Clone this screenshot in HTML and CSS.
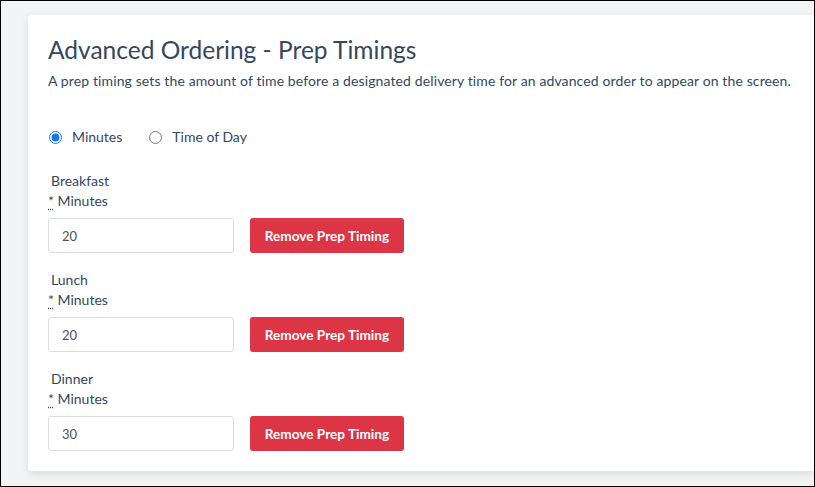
FILE: index.html
```html
<!DOCTYPE html>
<html lang="en">
<head>
<meta charset="utf-8">
<title>Advanced Ordering - Prep Timings</title>
<link rel="stylesheet" href="styles.css">
</head>
<body>
<div class="frame">
  <main class="card">
    <h1 class="title">Advanced Ordering - Prep Timings</h1>
    <p class="desc">A prep timing sets the amount of time before a designated delivery time for an advanced order to appear on the screen.</p>

    <div class="radios">
      <label class="radio"><input type="radio" name="mode" checked> <span>Minutes</span></label>
      <label class="radio"><input type="radio" name="mode"> <span>Time of Day</span></label>
    </div>

    <section class="group">
      <div class="meal">Breakfast</div>
      <label class="field-label"><abbr title="required">*</abbr> Minutes</label>
      <div class="row">
        <input class="input" type="text" value="20">
        <button class="btn-remove" type="button">Remove Prep Timing</button>
      </div>
    </section>

    <section class="group">
      <div class="meal">Lunch</div>
      <label class="field-label"><abbr title="required">*</abbr> Minutes</label>
      <div class="row">
        <input class="input" type="text" value="20">
        <button class="btn-remove" type="button">Remove Prep Timing</button>
      </div>
    </section>

    <section class="group">
      <div class="meal">Dinner</div>
      <label class="field-label"><abbr title="required">*</abbr> Minutes</label>
      <div class="row">
        <input class="input" type="text" value="30">
        <button class="btn-remove" type="button">Remove Prep Timing</button>
      </div>
    </section>
  </main>
</div>
</body>
</html>
```
FILE: styles.css
```css
* { box-sizing: border-box; }
html, body { margin: 0; padding: 0; }
body {
  font-family: "Lato", "Liberation Sans", sans-serif;
  color: #34475f;
  background: #f3f4f6;
}
.frame {
  width: 815px;
  height: 487px;
  border: 1px solid #000;
  background: #f3f4f6;
  padding: 14px 0 0 27px;
  overflow: hidden;
}
.card {
  background: #fff;
  border-radius: 4px 0 0 4px;
  box-shadow: 0 3px 10px rgba(0,0,0,0.10);
  padding: 20px 20px 19px 20px;
  height: 456px;
}
.title {
  margin: 0;
  font-size: 24.5px;
  line-height: 29px;
  font-weight: 400;
  color: #34475f;
}
.desc {
  margin: 7px 0 0 0;
  font-size: 14px;
  line-height: 20px;
  letter-spacing: 0.12px;
}
.radios {
  display: flex;
  gap: 26px;
  margin-top: 36px;
  align-items: center;
}
.radio {
  display: flex;
  align-items: center;
  gap: 10px;
  font-size: 14px;
  line-height: 20px;
}
.radio input {
  margin: 0 0 0 1px;
  width: 13px;
  height: 13px;
  accent-color: #1a73e8;
}
.group { margin-top: 24px; }
.group + .group { margin-top: 17px; }
.meal, .field-label {
  display: block;
  font-size: 14px;
  line-height: 20px;
  padding-left: 3px;
}
.field-label { padding-left: 0; }
abbr {
  text-decoration: underline dotted;
  text-underline-offset: 3px;
}
.row {
  display: flex;
  gap: 16px;
  margin-top: 7px;
}
.input {
  width: 186px;
  height: 35px;
  border: 1px solid #dadde2;
  border-radius: 3px;
  padding: 0 13px;
  font-family: inherit;
  font-size: 13px;
  color: #4a5260;
  background: #fff;
}
.btn-remove {
  width: 154px;
  height: 35px;
  border: none;
  border-radius: 3px;
  background: #dc3545;
  color: #fff;
  font-family: inherit;
  font-weight: 700;
  font-size: 13.6px;
}
```
